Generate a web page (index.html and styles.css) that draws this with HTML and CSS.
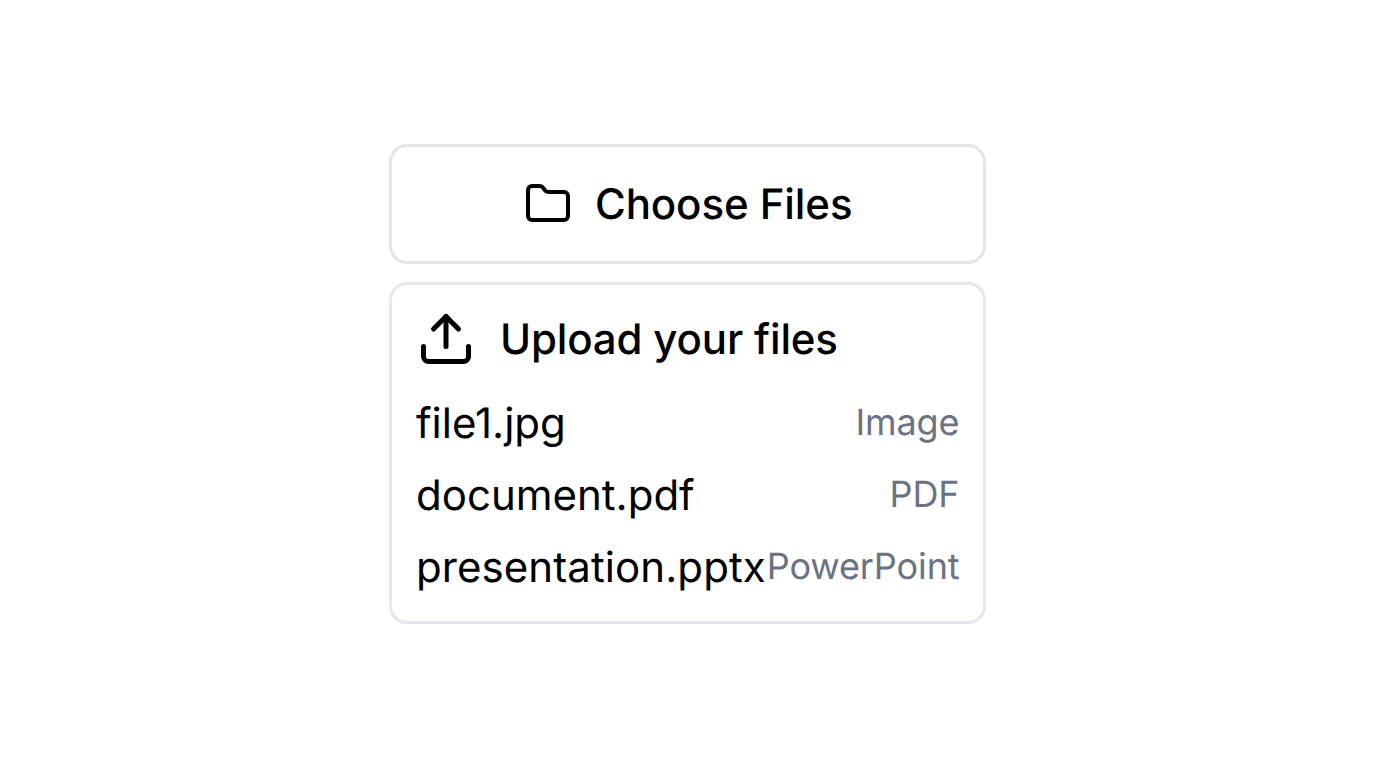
FILE: index.html
```html
<!DOCTYPE html>
<html lang="en">
<head>
<meta charset="utf-8">
<title>Upload files</title>
<link rel="stylesheet" href="styles.css">
</head>
<body>
<main class="uploader">
  <button class="choose" type="button">
    <svg class="icon-folder" viewBox="0 0 24 24"><path d="M20 20a2 2 0 0 0 2-2V8a2 2 0 0 0-2-2h-7.900a2 2 0 0 1-1.690-.900L9.600 3.900A2 2 0 0 0 7.930 3H4a2 2 0 0 0-2 2v13a2 2 0 0 0 2 2Z"/></svg>
    <span class="choose-label">Choose Files</span>
  </button>
  <section class="card">
    <header class="card-header">
      <svg class="icon-upload" viewBox="0 0 24 24"><path d="M21 15v4a2 2 0 0 1-2 2H5a2 2 0 0 1-2-2v-4"/><path d="M17 8l-5-5-5 5"/><path d="M12 3v12"/></svg>
      <h2 class="title">Upload your files</h2>
    </header>
    <ul class="files">
      <li class="file"><span class="name">file1.jpg</span><span class="kind">Image</span></li>
      <li class="file"><span class="name">document.pdf</span><span class="kind">PDF</span></li>
      <li class="file"><span class="name name-long">presentation.pptx</span><span class="kind">PowerPoint</span></li>
    </ul>
  </section>
</main>
</body>
</html>
```
FILE: styles.css
```css
* { box-sizing: border-box; }
body {
  margin: 0;
  padding-right: 1px;
  min-height: 768px;
  display: flex;
  align-items: center;
  justify-content: center;
  background: #fff;
  color: #000;
  font-family: Inter, sans-serif;
  font-size: 42px;
  line-height: 60px;
  text-rendering: geometricPrecision;
}
.uploader {
  width: 597px;
  display: flex;
  flex-direction: column;
  gap: 18px;
}
.choose {
  height: 120px;
  padding: 0 0 0 1.4px;
  display: flex;
  align-items: center;
  justify-content: center;
  gap: 23px;
  border: 3px solid #e5e5e5;
  border-radius: 18px;
  background: #fff;
  color: inherit;
  font: inherit;
  font-weight: 500;
  text-rendering: inherit;
}
.choose-label { padding-top: 2px; letter-spacing: -0.08px; }
.card {
  height: 342px;
  padding: 24px;
  border: 3px solid #e5e7eb;
  border-radius: 18px;
}
.card-header {
  height: 60px;
  display: flex;
  align-items: center;
}
svg {
  fill: none;
  stroke: currentColor;
  stroke-width: 2;
  stroke-linecap: round;
  stroke-linejoin: round;
}
.icon-folder { width: 48px; height: 48px; }
.icon-upload { width: 60px; height: 60px; margin-right: 24px; }
.title {
  margin: 0;
  padding-top: 2px;
  font-size: 42px;
  font-weight: 500;
  letter-spacing: -0.15px;
}
.files {
  margin: 24px 0 0;
  padding: 0;
  display: flex;
  flex-direction: column;
  gap: 12px;
  list-style: none;
}
.file {
  height: 60px;
  display: flex;
  align-items: center;
  justify-content: space-between;
}
.name { padding-top: 2px; }
.name-long { letter-spacing: 0.08px; }
.kind {
  margin-right: -0.5px;
  padding-bottom: 2px;
  font-size: 36px;
  letter-spacing: -0.1px;
  color: #6b7280;
}
```
